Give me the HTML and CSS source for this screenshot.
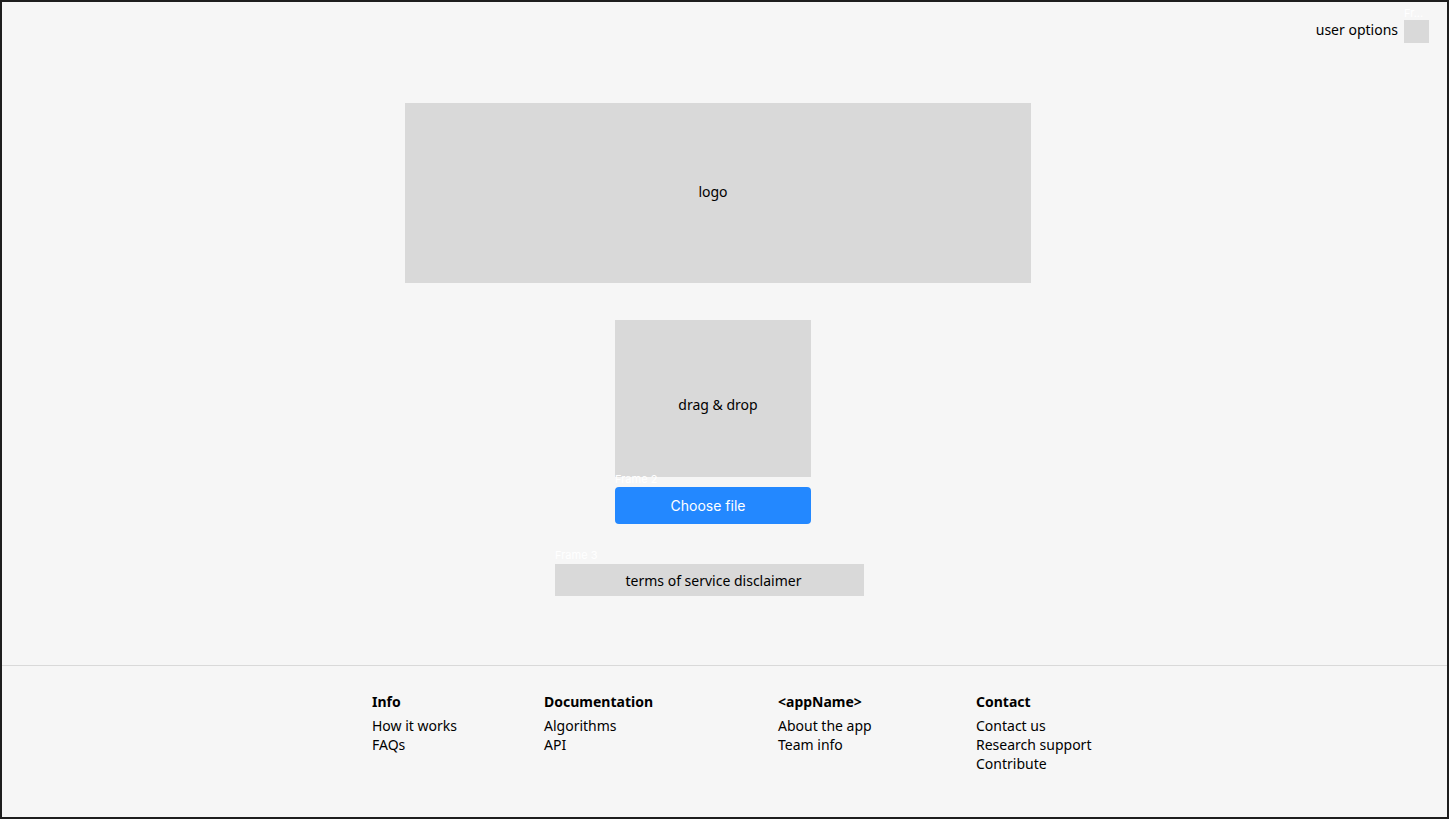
FILE: index.html
```html
<!DOCTYPE html>
<html lang="en">
<head>
<meta charset="utf-8">
<title>Upload</title>
<link rel="stylesheet" href="styles.css">
</head>
<body>
<div class="page">
  <main class="main">
    <header class="topbar">
      <span class="user-label">user options</span>
      <span class="user-box"><span class="frame-label">Fr...</span></span>
    </header>
    <section class="hero">
      <div class="logo">logo</div>
      <div class="dropzone"><span>drag &amp; drop</span></div>
      <button class="choose"><span class="frame-label">Frame 2</span>Choose file</button>
      <div class="terms"><span class="frame-label">Frame 3</span>terms of service disclaimer</div>
    </section>
  </main>
  <footer class="footer">
    <div class="col">
      <h4>Info</h4>
      <a>How it works</a>
      <a>FAQs</a>
    </div>
    <div class="col">
      <h4>Documentation</h4>
      <a>Algorithms</a>
      <a>API</a>
    </div>
    <div class="col">
      <h4>&lt;appName&gt;</h4>
      <a>About the app</a>
      <a>Team info</a>
    </div>
    <div class="col">
      <h4>Contact</h4>
      <a>Contact us</a>
      <a>Research support</a>
      <a>Contribute</a>
    </div>
  </footer>
</div>
</body>
</html>
```
FILE: styles.css
```css
* { box-sizing: border-box; }
html, body { margin: 0; padding: 0; }
body {
  background: #1e1e1e;
  font-family: "Noto Sans", "Open Sans", sans-serif;
  color: #000;
}
.page {
  width: 1449px;
  height: 819px;
  border: 2px solid #1e1e1e;
  background: #f6f6f6;
  display: flex;
  flex-direction: column;
}
.main {
  height: 663px;
  display: flex;
  flex-direction: column;
}
.topbar {
  display: flex;
  justify-content: flex-end;
  align-items: center;
  gap: 6px;
  padding: 18px 18px 0 0;
  height: 41px;
}
.user-label {
  font-size: 14px;
  line-height: 19px;
  margin-top: -5px;
}
.user-box {
  position: relative;
  width: 25px;
  height: 23px;
  background: #d9d9d9;
}
.frame-label {
  position: absolute;
  left: 0;
  bottom: 100%;
  font-family: "Inter", sans-serif;
  font-size: 11px;
  line-height: 14px;
  color: #ffffff;
  white-space: nowrap;
  font-weight: 400;
}
.hero {
  display: flex;
  flex-direction: column;
  align-items: flex-start;
  padding-left: 403px;
  margin-top: 60px;
}
.logo {
  width: 626px;
  height: 180px;
  background: #d9d9d9;
  display: flex;
  align-items: center;
  justify-content: center;
  font-size: 14px;
  padding-right: 10px;
  padding-bottom: 4px;
}
.dropzone {
  margin-top: 37px;
  margin-left: 210px;
  width: 196px;
  height: 157px;
  background: #d9d9d9;
  display: flex;
  align-items: center;
  justify-content: center;
  font-size: 14px;
  padding-left: 10px;
  padding-top: 12px;
}
.choose {
  position: relative;
  margin-top: 10px;
  margin-left: 210px;
  width: 196px;
  height: 37px;
  border: none;
  border-radius: 4px;
  background: #2388ff;
  color: #fff;
  font-family: "Inter", sans-serif;
  font-size: 14px;
  padding: 0 10px 0 0;
}
.choose .frame-label { bottom: calc(100% + 1px); }
.terms {
  position: relative;
  margin-top: 40px;
  margin-left: 150px;
  width: 309px;
  height: 32px;
  background: #d9d9d9;
  display: flex;
  align-items: center;
  justify-content: center;
  font-size: 14px;
  padding-left: 8px;
}
.terms .frame-label { bottom: calc(100% + 2px); }
.footer {
  flex: 1;
  border-top: 1px solid #d9d9d9;
  display: grid;
  grid-template-columns: 172px 234px 198px auto;
  padding: 26px 0 0 370px;
  align-content: start;
}
.col {
  display: flex;
  flex-direction: column;
  align-items: flex-start;
}
.col h4 {
  margin: 0 0 5px 0;
  font-size: 14px;
  line-height: 19px;
  font-weight: 700;
}
.col a {
  font-size: 14px;
  line-height: 19px;
  color: #000;
}
```
